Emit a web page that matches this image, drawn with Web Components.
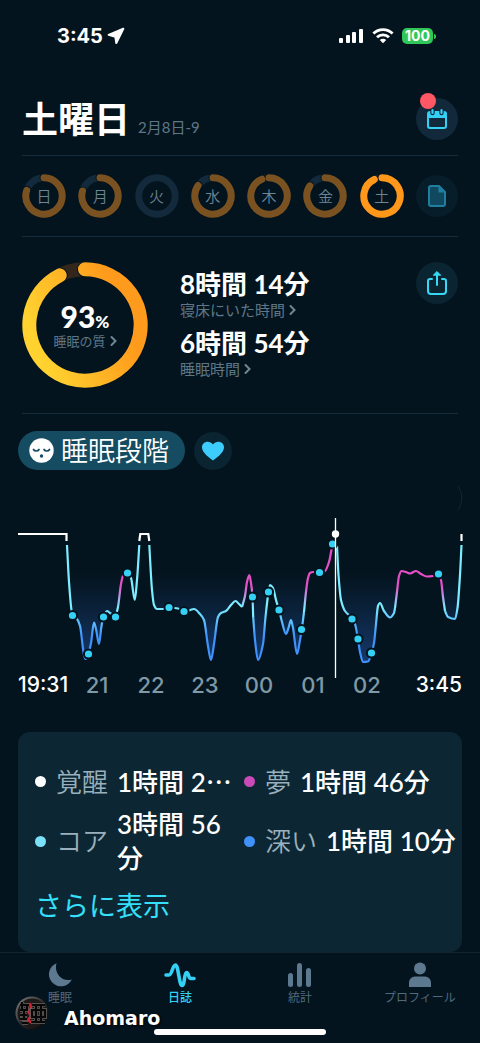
<!DOCTYPE html>
<html lang="ja">
<head>
<meta charset="utf-8">
<meta name="viewport" content="width=device-width, initial-scale=1">
<title>睡眠日誌</title>
<style>
  :root {
    --bg: #04141e;
    --line: #142c3c;
    --muted: #5d7788;
    --accent: #35d0f5;
    --round: #0a2431;
    --num: Lato, "Noto Sans CJK JP", sans-serif;
    --ui: Inter, "Noto Sans CJK JP", sans-serif;
  }
  body { margin: 0; background: var(--bg); color: #fff; font-family: var(--num); }
</style>
</head>
<body>
<sleep-app></sleep-app>
<script>
const define = (name, html, setup) => {
  const template = document.createElement('template');
  template.innerHTML = `<style>
    *, *::before, *::after { box-sizing: border-box; }
    :host { display: block; box-sizing: border-box; }
    button { font: inherit; color: inherit; background: none; border: 0; padding: 0; margin: 0; cursor: pointer; }
    a { color: inherit; text-decoration: none; }
    svg { display: block; }
  </style>${html}`;
  customElements.define(name, class extends HTMLElement {
    constructor() {
      super();
      this.attachShadow({ mode: 'open' }).append(template.content.cloneNode(true));
    }
    connectedCallback() { if (setup) setup(this, this.shadowRoot); }
  });
};

/* Phone status bar */
define('status-bar', `<style>
  :host { display: flex; justify-content: space-between; align-items: center; padding: 24px 44px 0 57px; height: 48px; font: 700 20px/24px var(--ui); }
  div { display: flex; align-items: center; }
  .right { gap: 8px; }
  .left { gap: 4px; }
  .battery { display: flex; align-items: center; gap: 1px; }
  .battery span { background: #30c759; border-radius: 5px; width: 31px; height: 16px; font-size: 14px; line-height: 16px; text-align: center; }
  .battery i { width: 2px; height: 5px; border-radius: 0 2px 2px 0; background: #30c759; }
</style>
<div class="left"><span>3:45</span>
  <svg width="18" height="18" viewBox="0 0 18 18"><path d="M16.300 1.700 1.600 7.800 8.300 9.700 9.300 16z" fill="#fff" stroke="#fff" stroke-width="2" stroke-linejoin="round"/></svg>
</div>
<div class="right">
  <svg width="25" height="16" viewBox="0 0 25 16" fill="#fff"><rect x="0" y="10" width="4" height="5" rx="1"/><rect x="7" y="7" width="4" height="8" rx="1"/><rect x="13" y="4" width="4" height="11" rx="1"/><rect x="20" y="1" width="4" height="14" rx="1"/></svg>
  <svg width="22" height="16" viewBox="0 0 22 16" fill="none" stroke="#fff" stroke-width="2.8"><path d="M1.400 5.600a13.600 13.600 0 0 1 19.200 0"/><path d="M5 9.300a8.500 8.500 0 0 1 12 0"/><path d="M11 15.200 7.800 12.100a4.400 4.400 0 0 1 6.400 0z" fill="#fff" stroke="none"/></svg>
  <div class="battery"><span>100</span><i></i></div>
</div>`);

/* Circular icon button */
define('round-button', `<style>
  :host { width: 42px; height: 42px; flex: none; position: relative; }
  :host([size=small]) { width: 38px; height: 38px; }
  button { width: 100%; height: 100%; border-radius: 50%; background: var(--round); display: grid; place-items: center; }
  :host([tone=slate]) button { background: #11293b; }
  :host([dim]) button { background: #071d29; }
  :host([badge])::before { content: ""; position: absolute; left: 4px; top: -5px; width: 16px; height: 16px; border-radius: 50%; background: #ff5864; }
</style><button><slot></slot></button>`, (el, root) => {
  root.querySelector('button').setAttribute('aria-label', el.getAttribute('label'));
});

/* Progress ring; content sits in the middle */
define('progress-ring', `<style>
  :host { display: grid; place-items: center; flex: none; }
  svg, .content { grid-area: 1 / 1; }
  .content { display: flex; flex-direction: column; align-items: center; }
</style><svg fill="none"></svg><div class="content"><slot></slot></div>`, (el, root) => {
  const size = +el.getAttribute('size'), width = +el.getAttribute('width');
  const degrees = +el.getAttribute('degrees') || 0;
  const c = size / 2, r = c - width / 2 - .3, a = degrees * Math.PI / 180;
  const svg = root.querySelector('svg');
  svg.setAttribute('width', size);
  svg.setAttribute('height', size);
  const d = `M${c} ${c - r}A${r} ${r} 0 1 1 ${c + r * Math.sin(a)} ${c - r * Math.cos(a)}`;
  const gradient = el.hasAttribute('gradient');
  svg.innerHTML = `<defs><linearGradient id="g" x1="1" y1=".1" x2="0" y2=".5"><stop offset=".25" stop-color="#ff9b1c"/><stop offset="1" stop-color="#ffd230"/></linearGradient></defs>
    <circle cx="${c}" cy="${c}" r="${r}" stroke="${el.getAttribute('track') || '#122a3b'}" stroke-width="${width}"/>` +
    (degrees ? `<path d="${d}" stroke="#04141e" stroke-width="${width + 2}" stroke-linecap="round"/>
    <path d="${d}" stroke="${gradient ? 'url(#g)' : el.getAttribute('color')}" stroke-width="${width}" stroke-linecap="round"/>` : '');
});

define('day-header', `<style>
  :host { display: flex; align-items: center; justify-content: space-between; margin: 50px 22px 0; padding-bottom: 15px; border-bottom: 1px solid var(--line); }
  div { display: flex; align-items: baseline; gap: 8px; }
  h1 { margin: 0; font: 700 36px/42px var(--num); }
  span { font-size: 15px; color: var(--muted); }
</style>
<div><h1>土曜日</h1><span>2月8日-9</span></div>
<round-button label="カレンダー" tone="slate" badge>
  <svg width="22" height="22" viewBox="0 0 22 22" style="display:block"><rect x="2" y="4" width="18" height="16" rx="2" fill="none" stroke="#35d0f5" stroke-width="2"/><path d="M2 4h18v6H2z" fill="#35d0f5"/><path d="M6.500 2v3M15.500 2v3" stroke="#11293b" stroke-width="4.400" stroke-linecap="round"/><path d="M6.500 2v3M15.500 2v3" stroke="#35d0f5" stroke-width="2.200" stroke-linecap="round"/></svg>
</round-button>`);

define('week-row', `<style>
  :host { display: flex; align-items: center; justify-content: space-between; margin: 0 22px; padding: 18px 0; border-bottom: 1px solid var(--line); }
  button { font-size: 15px; line-height: 20px; color: #6b8695; font-weight: 350; }
</style><round-button label="メモ" dim>
  <svg width="20" height="24" viewBox="0 0 20 24" style="display:block"><path d="M4 2h8l6 6v12a2 2 0 0 1-2 2H4a2 2 0 0 1-2-2V4a2 2 0 0 1 2-2z" fill="#10495f" stroke="#1f7f9f" stroke-width="2"/><path d="M11.500 2v6.500H18z" fill="#1f7f9f"/></svg>
</round-button>`, (el, root) => {
  const note = root.querySelector('round-button');
  for (const [day, degrees] of [['日', 288], ['月', 286], ['火', 0], ['水', 305], ['木', 337], ['金', 304], ['土', 335]]) {
    const button = document.createElement('button');
    button.innerHTML = `<progress-ring size="44" width="7" degrees="${degrees}" color="${day === '土' ? '#ff981a' : '#7a5120'}">${day}</progress-ring>`;
    note.before(button);
  }
});

define('sleep-metric', `<style>
  strong { display: block; font: 700 26px/31px var(--num); }
  button { display: flex; align-items: center; gap: 4px; color: var(--muted); font-size: 15px; line-height: 20px; }
</style><strong><slot></slot></strong>
<button><slot name="caption"></slot><svg width="7" height="12" viewBox="0 0 7 12" fill="none" stroke="#6f8794" stroke-width="2" stroke-linecap="round"><path d="M1.500 2l4 4-4 4"/></svg></button>`);

define('sleep-summary', `<style>
  :host { display: flex; align-items: flex-start; margin: 0 22px; padding: 25px 0; border-bottom: 1px solid var(--line); }
  .metrics { flex: 1; display: grid; gap: 8px; padding: 7px 0 0 32px; }
  .score { font: 900 30px/32px var(--num); }
  .score small { font-size: 17px; line-height: 17px; }
  button { display: flex; align-items: center; gap: 4px; color: var(--muted); font-size: 13px; line-height: 18px; }
</style>
<progress-ring size="126" width="14" degrees="333" gradient track="#33271c">
  <div class="score">93<small>%</small></div>
  <button>睡眠の質<svg width="7" height="12" viewBox="0 0 7 12" fill="none" stroke="#6f8794" stroke-width="2" stroke-linecap="round"><path d="M1.500 2l4 4-4 4"/></svg></button>
</progress-ring>
<div class="metrics">
  <sleep-metric>8時間 14分<span slot="caption">寝床にいた時間</span></sleep-metric>
  <sleep-metric>6時間 54分<span slot="caption">睡眠時間</span></sleep-metric>
</div>
<round-button label="共有">
  <svg width="24" height="26" viewBox="0 0 24 26" fill="none" stroke="#35d8f5" stroke-width="2" stroke-linecap="round" stroke-linejoin="round"><path d="M7 9H5a2 2 0 0 0-2 2v10a3 3 0 0 0 3 3h12a3 3 0 0 0 3-3V11a2 2 0 0 0-2-2h-2"/><path d="M12 15V3"/><path d="M8.500 5 12 1.500 15.500 5z" fill="#35d8f5" stroke-width="1"/></svg>
</round-button>`);

define('chart-picker', `<style>
  :host { display: flex; align-items: center; gap: 9px; margin: 17px 18px 0; }
  .pill { display: flex; align-items: center; gap: 7px; height: 39px; padding: 0 16px 0 11px; border-radius: 20px; background: #154c61; font: 350 27px/39px var(--num); }
</style>
<button class="pill"><svg width="25" height="25" viewBox="0 0 25 25"><circle cx="12.500" cy="12.500" r="12.200" fill="#fff"/><path d="M4.500 11.500c1 2 4.500 2 5.500 0M15 11.500c1 2 4.500 2 5.500 0" fill="none" stroke="#154c61" stroke-width="1.700" stroke-linecap="round"/><circle cx="12.500" cy="18" r="1.700" fill="#154c61"/></svg><span>睡眠段階</span></button>
<round-button label="心拍数" size="small">
  <svg width="24" height="22" viewBox="0 0 24 22"><path d="M12 20.500C9 18 1 13 1 7.200 1 1.500 8.500-.5 12 4.500c3.500-5 11-3 11 2.700C23 13 15 18 12 20.500z" fill="#3dcdfd"/></svg>
</round-button>`);

/* Hypnogram. Points are [x, y] in chart units. */
define('stage-chart', `<style>
  :host { margin: 14px 18px 0; }
  svg { width: 100%; overflow: visible; }
  .hours { display: grid; grid-template-columns: 52fr repeat(6, 54fr) 68fr; font: 500 22px/26px var(--ui); color: #8099a6; text-align: center; }
  .hours b { font-size: 21px; font-weight: 500; color: #fff; white-space: nowrap; }
  .hours b:first-child { justify-self: start; }
  .hours b:last-child { justify-self: end; }
</style>
<svg viewBox="18 484 444 188" fill="none" role="img" aria-label="睡眠段階のグラフ"></svg>
<div class="hours"><b>19:31</b><span>21</span><span>22</span><span>23</span><span>00</span><span>01</span><span>02</span><b>3:45</b></div>`, (el, root) => {
  const segments = [
    ['core', [[67, 545], [69, 582], [71.5, 610], [73, 616], [77, 619], [80, 626], [84, 655], [85.5, 659], [88, 655], [91, 643], [94, 622.5], [96, 629], [99, 644], [101.5, 626], [103.5, 617], [107, 611], [110, 613], [115.5, 617]]],
    ['dream', [[115.5, 617], [118, 607], [121, 584], [123, 576], [127.5, 573]]],
    ['core', [[127.5, 573], [131, 578], [134.8, 600], [137, 580], [139.3, 545]]],
    ['core', [[149.3, 545], [152, 590], [154, 605], [157, 609], [163, 609], [169, 607.5], [178, 608.5], [184, 611.5], [189, 610.5], [194, 609], [200, 614], [204, 620], [208, 646], [211, 660], [214, 644], [218, 617], [221, 613], [226, 611], [231, 605], [235.5, 601], [239, 604], [242, 607]]],
    ['dream', [[242, 607], [245, 596], [247, 582], [249.3, 575], [251, 583], [252.5, 597], [253.2, 617]]],
    ['core', [[253.2, 617], [255, 640], [258, 660], [263, 644], [265.5, 617], [268.5, 592], [270, 585], [273, 588], [276, 600], [279, 610], [282, 622], [286, 634], [288.5, 628], [291, 620], [293, 628], [297, 654], [300, 640], [302, 628], [304, 612]]],
    ['dream', [[304, 612], [306, 592], [308, 578], [310, 573], [313, 572], [319.5, 572.5], [325, 571], [329, 562], [332.5, 544]]],
    ['core', [[337, 546], [338.5, 575], [341, 600], [345, 611], [352, 618], [355, 624], [358, 639], [360, 652], [363, 662], [368, 661.5], [371.5, 653], [374, 643], [376, 624], [378, 606], [380, 603], [384, 611], [390, 617.5], [394, 613], [395, 608]]],
    ['dream', [[395, 608], [397, 592], [399, 576], [401.5, 571], [406, 572], [410, 573.5], [416, 571], [421, 574], [427, 576.5], [433, 576], [438.5, 574], [441, 580], [443, 597], [445, 611]]],
    ['core', [[445, 611], [448, 617], [455, 619], [457.5, 608], [460, 575], [461.5, 545]]],
  ];
  /* Monotone cubic interpolation: smooth, with no overshoot at peaks. */
  const curve = p => {
    const n = p.length, s = [], m = [];
    for (let i = 0; i < n - 1; i++) s[i] = (p[i + 1][1] - p[i][1]) / (p[i + 1][0] - p[i][0]);
    for (let i = 0; i < n; i++) {
      if (i === 0) m[i] = s[0];
      else if (i === n - 1) m[i] = s[n - 2];
      else m[i] = s[i - 1] * s[i] <= 0 ? 0 : 2 * s[i - 1] * s[i] / (s[i - 1] + s[i]);
    }
    let d = '';
    for (let i = 0; i < n - 1; i++) {
      const h = (p[i + 1][0] - p[i][0]) / 3;
      d += `C${p[i][0] + h} ${p[i][1] + m[i] * h} ${p[i + 1][0] - h} ${p[i + 1][1] - m[i + 1] * h} ${p[i + 1]}`;
    }
    return d;
  };
  const dots = [[72.5, 615.5], [88.5, 654], [103.5, 617], [115.5, 617], [127.5, 573], [169, 607.5], [184, 611.5], [252.5, 597], [268.5, 592], [279, 610], [301.5, 629.5], [319.5, 572.5], [332.5, 544], [352, 619], [358, 639], [371.5, 653], [438.5, 574]];
  root.querySelector('svg').innerHTML = `
    <defs>
      <linearGradient id="core" gradientUnits="userSpaceOnUse" x1="0" y1="606" x2="0" y2="636"><stop stop-color="#7ceeff"/><stop offset="1" stop-color="#3f92fb"/></linearGradient>
      <linearGradient id="dream" gradientUnits="userSpaceOnUse" x1="0" y1="586" x2="0" y2="608"><stop stop-color="#e64fc8"/><stop offset="1" stop-color="#7ceeff"/></linearGradient>
      <linearGradient id="fill" gradientUnits="userSpaceOnUse" x1="0" y1="572" x2="0" y2="660"><stop stop-color="#12305a" stop-opacity="0"/><stop offset="1" stop-color="#15386a"/></linearGradient>
    </defs>
    <path d="M458 486c5 8 5 16 0 24" stroke="#0f2733"/>
    <path fill="url(#fill)" d="M67 534${segments.map(([, p]) => `L${p[0]}${curve(p)}`).join('')}V534z"/>
    ${segments.map(([stage, p]) => `<path d="M${p[0]}${curve(p)}" stroke="url(#${stage})" stroke-width="2.2"/>`).join('')}
    <path d="M18 534H66.500V541M139.300 541L140.300 534H148.300L149.300 541M461.500 534V541" stroke="#fff" stroke-width="2.2"/>
    ${dots.map(([x, y]) => `<circle cx="${x}" cy="${y}" r="4.600" fill="#35d0f5" stroke="#04141e" stroke-width="2"/>`).join('')}
    <path d="M335.500 518V678" stroke="#fff" stroke-width="1.300"/><circle cx="335.500" cy="534" r="3.700" fill="#fff"/>`;
});

define('stage-total', `<style>
  :host { display: flex; align-items: center; font: 400 26px/34px var(--num); min-width: 0; }
  i { flex: none; width: 11px; height: 11px; border-radius: 50%; background: var(--dot); margin-right: 10px; }
  .name { flex: none; color: #9ab0bc; font-weight: 350; margin-right: 9px; }
  .value { font-weight: 500; }
</style><i></i><span class="name"><slot name="name"></slot></span><span class="value"><slot></slot></span>`);

define('stage-card', `<style>
  :host { margin: 34px 18px 0; padding: 32px 0 29px 17px; border-radius: 12px; background: #0c2733; }
  .grid { display: grid; grid-template-columns: 209fr 218fr; row-gap: 8px; }
  .cjk { font-family: "Noto Sans CJK JP", sans-serif; }
  .more { display: block; width: fit-content; margin-top: 14px; font: 400 27px/34px var(--num); color: #35e0fa; }
</style>
<div class="grid">
  <stage-total style="--dot:#fff"><span slot="name">覚醒</span>1時間 2<span class="cjk">…</span></stage-total>
  <stage-total style="--dot:#c94bb8"><span slot="name">夢</span>1時間 46分</stage-total>
  <stage-total style="--dot:#7be0fa"><span slot="name">コア</span>3時間 56分</stage-total>
  <stage-total style="--dot:#3f92fb"><span slot="name">深い</span>1時間 10分</stage-total>
</div>
<a class="more" href="#more">さらに表示</a>`);

define('tab-bar', `<style>
  :host { border-top: 1px solid #0f2430; padding-bottom: 9px; }
  nav { display: grid; grid-template-columns: repeat(4, 1fr); padding-top: 9px; }
  a { display: flex; flex-direction: column; align-items: center; gap: 2px; font-size: 12px; line-height: 16px; color: #4f6a7d; }
  a[aria-current] { color: var(--accent); font-weight: 500; }
  .home { width: 172px; height: 6px; border-radius: 3px; background: #fff; margin: 23px auto 0; }
</style>
<nav>
  <a href="#sleep"><svg width="26" height="26" viewBox="0 0 26 26"><path d="M9.500 1.200A12 12 0 1 0 24.800 17.500C16 20.500 6.500 12 9.500 1.200z" fill="#5c7990"/></svg>睡眠</a>
  <a href="#journal" aria-current="page"><svg width="32" height="26" viewBox="0 0 32 26" fill="none" stroke="#35d0f5" stroke-width="3.600" stroke-linecap="round" stroke-linejoin="round"><path d="M2 13H5C8 13 8.500 3 11.500 3S15 23.500 18 23.500 20 10.500 22.500 10.500 24 16.500 27 16.500H30"/></svg>日誌</a>
  <a href="#stats"><svg width="26" height="26" viewBox="0 0 26 26" fill="#5c7990"><rect x="1" y="11" width="5" height="14" rx="2.500"/><rect x="10" y="1" width="5" height="24" rx="2.500"/><rect x="19" y="6" width="5" height="19" rx="2.500"/></svg>統計</a>
  <a href="#profile"><svg width="26" height="26" viewBox="0 0 26 26" fill="#5c7990"><circle cx="13" cy="6.500" r="6"/><path d="M2 25v-4.500a6 6 0 0 1 6-6h10a6 6 0 0 1 6 6V25z"/></svg>プロフィール</a>
</nav>
<div class="home"></div>`);

/* Owner's mark laid over the tab bar */
define('owner-mark', `<style>
  :host { position: absolute; left: 15px; bottom: 14px; display: flex; align-items: center; gap: 15px; font: 700 19px/34px "DejaVu Sans", sans-serif; text-shadow: 1px 1px 3px #000; }
  span { padding-top: 10px; line-height: 24px; }
</style>
<svg width="34" height="34" viewBox="0 0 34 34">
  <defs>
    <linearGradient id="m" x1="0" y1="0" x2="1" y2="1"><stop stop-color="#888"/><stop offset=".5" stop-color="#2a2a2a"/><stop offset="1" stop-color="#000"/></linearGradient>
    <path id="lattice" d="M5 9h9M7 6v8M12 9v6M5 14h8M5 19h7M9 15v8M5 23h7M7 27h6M17 9h13M16 26h14M21 9v17M26 9v17M17 14h13v7H17z"/>
  </defs>
  <circle cx="17" cy="17" r="16.500" fill="url(#m)"/><circle cx="17" cy="17" r="14.500" fill="#1c1918"/>
  <path d="M15 7l1 5-3 3 3 5-3 4 4 3" fill="none" stroke="#d22232" stroke-width="2.500"/>
  <use href="#lattice" fill="none" stroke="#8d8882" stroke-width="3.600"/>
  <use href="#lattice" fill="none" stroke="#070707" stroke-width="2.600"/>
</svg><span>Ahomaro</span>`);

define('sleep-app', `<style>
  :host { position: relative; display: flex; flex-direction: column; min-height: 100vh; }
  tab-bar { margin-top: auto; }
</style>
<status-bar></status-bar>
<main>
  <day-header></day-header>
  <week-row></week-row>
  <sleep-summary></sleep-summary>
  <chart-picker></chart-picker>
  <stage-chart></stage-chart>
  <stage-card></stage-card>
</main>
<tab-bar></tab-bar>
<owner-mark></owner-mark>`);
</script>
</body>
</html>
